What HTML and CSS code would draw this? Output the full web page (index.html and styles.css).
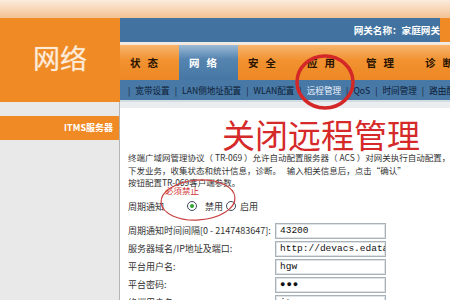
FILE: index.html
```html
<!DOCTYPE html>
<html lang="zh-CN">
<head>
<meta charset="utf-8">
<title>网络 - 远程管理</title>
<link rel="stylesheet" href="styles.css">
</head>
<body>
<div class="page">
  <div class="topband"></div>
  <div class="head">
    <div class="brand"><span>网络</span></div>
    <div class="navcol">
      <div class="titlebar"><span class="gw">网关名称：家庭网关</span><span class="corner"></span></div>
      <div class="sep"></div>
      <div class="tabs">
        <div class="tab">状态</div>
        <div class="tab active">网络</div>
        <div class="tab">安全</div>
        <div class="tab">应用</div>
        <div class="tab">管理</div>
        <div class="tab">诊断</div>
      </div>
      <div class="subnav">
        <span>|</span><span>宽带设置</span>
        <span>|</span><span>LAN侧地址配置</span>
        <span>|</span><span>WLAN配置</span>
        <span>|</span><span class="cur">远程管理</span>
        <span>|</span><span>QoS</span>
        <span>|</span><span>时间管理</span>
        <span>|</span><span>路由配置</span>
      </div>
      <div class="subline"></div>
    </div>
  </div>
  <div class="body">
    <aside class="side"><div class="side-item">ITMS服务器</div></aside>
    <main class="content">
      <p class="intro">终端广域网管理协议（ TR-069 ）允许自动配置服务器（ ACS ）对网关执行自动配置，<br>下发业务，收集状态和统计信息，诊断。&nbsp;&nbsp;&nbsp;输入相关信息后，点击<span class="fw">“确认”</span><br>按钮配置TR-069客户端参数。</p>
      <div class="radio-row">
        <span class="lbl">周期通知</span>
        <input class="radio" type="radio" name="inform" checked><span class="opt">禁用</span>
        <input class="radio radio2" type="radio" name="inform"><span class="opt">启用</span>
      </div>
      <div class="fields">
        <label>周期通知时间间隔[0 - 2147483647]:</label><input type="text" value="43200">
        <label>服务器域名/IP地址及端口:</label><input type="text" value="http://devacs.edatahome.com:9090/ACS-server/ACS">
        <label>平台用户名:</label><input type="text" value="hgw">
        <label>平台密码:</label><input class="pw" type="text" value="●●●">
        <label>终端用户名:</label><input type="text" value="itms">
      </div>
    </main>
  </div>
  <svg class="marks" width="450" height="300" viewBox="0 0 450 300">
    <ellipse cx="325" cy="82" rx="28" ry="26" fill="none" stroke="#d42828" stroke-width="3.5"/>
    <ellipse cx="198" cy="200" rx="37" ry="20" fill="none" stroke="#c94040" stroke-width="1.2" transform="rotate(-4 198 200)"/>
  </svg>
  <div class="note-big">关闭远程管理</div>
  <div class="note-small">必须禁止</div>
</div>
</body>
</html>
```
FILE: styles.css
```css
body {
  margin: 0;
  width: 450px;
  height: 300px;
  overflow: hidden;
  font-family: "Noto Sans CJK SC", "Liberation Sans", sans-serif;
}
.page {
  position: relative;
  width: 450px;
  height: 300px;
  overflow: hidden;
  background: #fff;
}
.topband {
  height: 18px;
  background: linear-gradient(#fbebdc, #f4c292);
}
.head {
  display: flex;
  height: 84px;
}
.brand {
  width: 120px;
  flex: none;
  background: #ef8a25;
  display: flex;
  align-items: center;
  justify-content: center;
  padding-bottom: 5px;
  box-sizing: border-box;
  color: #fdebd8;
  font-size: 27px;
  text-shadow: 0 0 1px #f7c591;
}
.navcol {
  flex: 1;
  min-width: 0;
  display: flex;
  flex-direction: column;
}
.titlebar {
  height: 24px;
  display: flex;
  background: #4272a0;
}
.gw {
  flex: 1;
  text-align: right;
  color: #fff;
  font-weight: bold;
  font-size: 9.6px;
  line-height: 24px;
}
.corner {
  width: 10px;
  background: #ef8a25;
}
.sep {
  height: 3px;
  background: linear-gradient(#e6edf3, #fde4cb);
}
.tabs {
  height: 35px;
  display: flex;
  background: #ef8a25;
  overflow: hidden;
}
.tab {
  width: 59px;
  flex: none;
  box-sizing: border-box;
  padding-left: 10px;
  font-size: 10.5px;
  font-weight: bold;
  letter-spacing: 7px;
  line-height: 35px;
  color: #2a1400;
  white-space: nowrap;
  background: linear-gradient(#f8b46e, #f1912f 45%, #ee8826);
}
.tab.active {
  color: #fff;
  background: linear-gradient(#9bbbd6, #5584b0 40%, #4677a4);
}
.subnav {
  height: 20px;
  background: #4878a5;
  display: flex;
  align-items: center;
  gap: 5px;
  padding-left: 8px;
  font-size: 8.6px;
  color: #0d1c36;
  white-space: nowrap;
  overflow: hidden;
}
.subnav .cur {
  color: #eef4ff;
}
.subline {
  height: 2px;
  background: #d3dbe3;
}
.body {
  display: flex;
  height: 198px;
}
.side {
  width: 119px;
  flex: none;
  border-right: 1px solid #b5b5b5;
  background: #e9e9e9;
  padding-top: 14px;
}
.side-item {
  height: 24px;
  background: #ef8a25;
  color: #fff;
  font-weight: bold;
  font-size: 9px;
  line-height: 24px;
  text-align: right;
  padding-right: 6px;
}
.content {
  flex: 1;
  min-width: 0;
  border-top: 6px solid #eaedef;
  padding: 43px 0 0 8px;
  color: #333;
  font-size: 9px;
  overflow: hidden;
}
.intro {
  margin: 0;
  font-size: 8.5px;
  line-height: 12.5px;
  white-space: nowrap;
}
.fw {
  font-feature-settings: "fwid" 1;
}
.radio-row {
  display: flex;
  align-items: center;
  height: 17px;
  margin-top: 9px;
}
.radio-row .lbl {
  width: 59px;
}
.radio {
  appearance: none;
  width: 10px;
  height: 10px;
  margin: 0 8px 0 0;
  border: 1px solid #3b4a58;
  border-radius: 50%;
  background: #fff;
  box-sizing: border-box;
  display: grid;
  place-content: center;
}
.radio:checked::before {
  content: "";
  width: 4px;
  height: 4px;
  border-radius: 50%;
  background: #2fa52f;
}
.radio2 {
  margin: 0 4px 0 3px;
}
.opt {
  width: 18px;
}
.fields {
  display: grid;
  grid-template-columns: 147px 111px;
  grid-auto-rows: 18px;
  align-items: center;
  margin-top: 7px;
}
.fields label {
  white-space: nowrap;
}
.fields input {
  width: 111px;
  height: 16px;
  box-sizing: border-box;
  border: 1px solid #a9b2b9;
  box-shadow: inset 0 0 0 1px #dde3e7;
  padding: 0 0 0 4px;
  font: 9.5px "Liberation Mono", "Noto Sans CJK SC", monospace;
  color: #111;
  outline: none;
  background: #fff;
}
.fields input.pw {
  font-size: 9px;
  letter-spacing: 1px;
}
.marks {
  position: absolute;
  left: 0;
  top: 0;
  pointer-events: none;
}
.note-big {
  position: absolute;
  left: 222px;
  top: 118px;
  font-size: 33px;
  line-height: 33px;
  color: #d62a2a;
  white-space: nowrap;
}
.note-small {
  position: absolute;
  left: 165px;
  top: 185px;
  font-size: 8.5px;
  line-height: 10px;
  color: #d02c2c;
  white-space: nowrap;
}
```
